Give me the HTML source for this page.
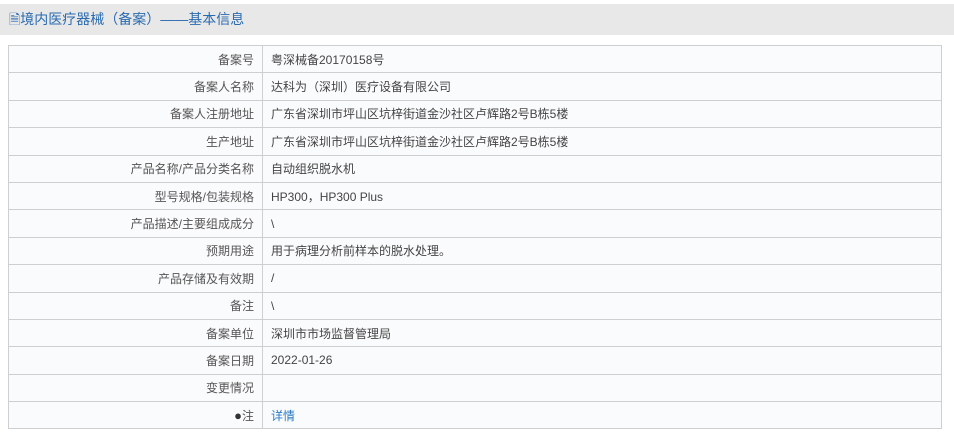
<!DOCTYPE html>
<html><head><meta charset="utf-8"><style>
body{margin:0;background:#fff;font-family:"Liberation Sans","Noto Sans CJK SC",sans-serif;font-size:12px;color:#444;width:954px;height:441px;overflow:hidden}
.hd{position:absolute;top:4px;left:0;width:954px;height:31px;background:#e8e8e8;color:#2a6bb0;font-size:14px;line-height:31px;padding-left:9px;box-sizing:border-box}
table{position:absolute;top:45px;left:8px;width:934px;border-collapse:collapse}
td{border:1px solid #cfcfcf;height:26.4px;padding:0 8px;background:#fafbfc}
td.l{width:237px;text-align:right;color:#555}
a{color:#2a7ac6;text-decoration:none}
</style></head><body>
<div class="hd">&#128462;境内医疗器械（备案）——基本信息</div>
<table>
<tr><td class="l">备案号</td><td>粤深械备20170158号</td></tr>
<tr><td class="l">备案人名称</td><td>达科为（深圳）医疗设备有限公司</td></tr>
<tr><td class="l">备案人注册地址</td><td>广东省深圳市坪山区坑梓街道金沙社区卢辉路2号B栋5楼</td></tr>
<tr><td class="l">生产地址</td><td>广东省深圳市坪山区坑梓街道金沙社区卢辉路2号B栋5楼</td></tr>
<tr><td class="l">产品名称/产品分类名称</td><td>自动组织脱水机</td></tr>
<tr><td class="l">型号规格/包装规格</td><td>HP300，HP300 Plus</td></tr>
<tr><td class="l">产品描述/主要组成成分</td><td>\</td></tr>
<tr><td class="l">预期用途</td><td>用于病理分析前样本的脱水处理。</td></tr>
<tr><td class="l">产品存储及有效期</td><td>/</td></tr>
<tr><td class="l">备注</td><td>\</td></tr>
<tr><td class="l">备案单位</td><td>深圳市市场监督管理局</td></tr>
<tr><td class="l">备案日期</td><td>2022-01-26</td></tr>
<tr><td class="l">变更情况</td><td></td></tr>
<tr><td class="l"><span style="font-size:13px;color:#333">&#9679;</span>注</td><td><a>详情</a></td></tr>
</table>
</body></html>
